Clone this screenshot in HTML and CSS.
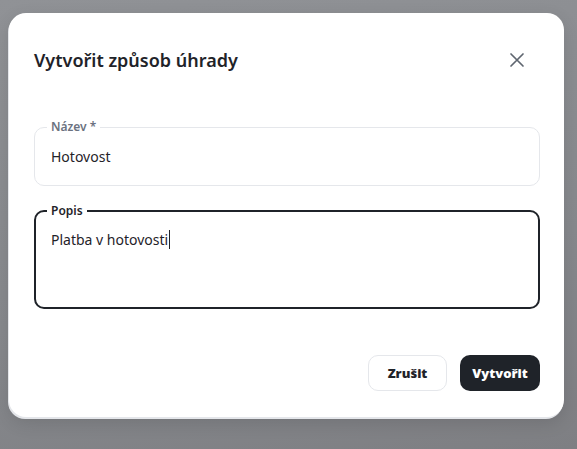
FILE: index.html
```html
<!DOCTYPE html>
<html lang="cs">
<head>
  <meta charset="UTF-8"/>
  <meta name="viewport" content="width=device-width,initial-scale=1.0"/>
  <title>Vytvořit způsob úhrady</title>
  <link rel="stylesheet" href="styles.css">
</head>
<body>

  <div class="backdrop">
    <div class="dialog">
      <!-- HEADER -->
      <div class="dialog-head">
        <h2 class="dialog-title">Vytvořit způsob úhrady</h2>
        <button class="close-btn" aria-label="Zavřít">
          <svg width="16" height="16" viewBox="0 0 16 16">
            <path d="M2 2 L14 14 M14 2 L2 14" stroke="#5f6670" stroke-width="1.7" stroke-linecap="round" fill="none"/>
          </svg>
        </button>
      </div>

      <!-- FORM -->
      <fieldset class="field">
        <legend>Název *</legend>
        <div class="field-value">Hotovost</div>
      </fieldset>

      <fieldset class="field field-focus">
        <legend>Popis</legend>
        <div class="field-value field-area">Platba v hotovosti<span class="caret"></span></div>
      </fieldset>

      <!-- ACTIONS -->
      <div class="actions">
        <button class="btn btn-light">Zrušit</button>
        <button class="btn btn-dark">Vytvořit</button>
      </div>
    </div>
  </div>

</body>
</html>
```

FILE: styles.css
```css
/* RESET */
* {
  margin: 0;
  padding: 0;
  box-sizing: border-box;
}

html, body {
  height: 100%;
  font-family: 'Noto Sans', 'Open Sans', Arial, sans-serif;
  color: #1f2329;
}

/* BACKDROP */
.backdrop {
  height: 100%;
  padding: 13px 13px 0 9px;
  background: linear-gradient(170deg, #909296 0%, #87898d 60%, #7e7f83 100%);
  overflow: hidden;
}

/* DIALOG */
.dialog {
  width: 555px;
  background: #fff;
  border-radius: 17px;
  padding: 24px 24px 26px 25px;
  box-shadow: -1px 2px 0 #e4e6ea, 0 6px 18px rgba(0, 0, 0, 0.12);
}

.dialog-head {
  display: flex;
  align-items: center;
  justify-content: space-between;
  height: 46px;
  margin-bottom: 37px;
}

.dialog-title {
  font-size: 18px;
  font-weight: 600;
  color: #1f2329;
}

.close-btn {
  width: 30px;
  height: 30px;
  margin-right: 8px;
  border: none;
  background: none;
  display: flex;
  align-items: center;
  justify-content: center;
}

/* FIELDS */
.field {
  border: 1px solid #e5e7eb;
  border-radius: 10px;
  padding: 13px 16px 18px;
  width: 506px;
}

.field legend {
  font-size: 12px;
  line-height: 14px;
  font-weight: 600;
  color: #6b7280;
  padding: 0 4px;
  margin-left: -4px;
}

.field-value {
  font-size: 14px;
  line-height: 20px;
  color: #1f2329;
}

.field-focus {
  margin-top: 18px;
  border: 2px solid #1f2329;
  padding: 12px 15px 19px;
}

.field-focus legend {
  color: #1f2329;
}

.field-area {
  height: 58px;
}

.caret {
  display: inline-block;
  width: 1px;
  height: 19px;
  background: #1f2329;
  vertical-align: -4px;
  margin-left: 1px;
}

/* ACTIONS */
.actions {
  display: flex;
  justify-content: flex-end;
  gap: 13px;
  margin-top: 46px;
}

.btn {
  height: 36px;
  border-radius: 10px;
  font-family: 'Open Sans', 'Noto Sans', Arial, sans-serif;
  font-size: 13px;
  font-weight: 800;
  cursor: pointer;
}

.btn-light {
  width: 79px;
  background: #fff;
  border: 1px solid #e5e7eb;
  color: #1f2329;
}

.btn-dark {
  width: 80px;
  background: #1f2329;
  border: none;
  color: #fff;
}
```
